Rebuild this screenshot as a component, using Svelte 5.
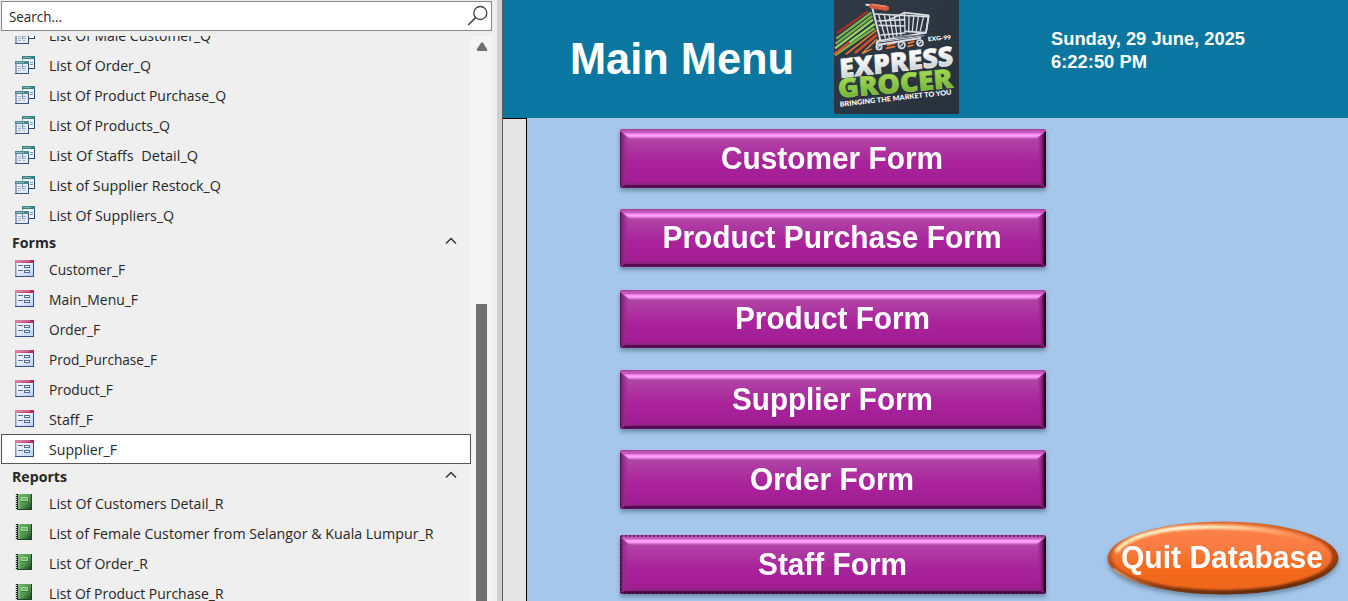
<script>
  const queries = [
    ['List Of Male Customer_Q', 162],
    ['List Of Order_Q', 102],
    ['List Of Product Purchase_Q', 177],
    ['List Of Products_Q', 121],
    ['List Of Staffs\u00a0 Detail_Q', 149],
    ['List of Supplier Restock_Q', 172],
    ['List Of Suppliers_Q', 125]
  ];
  const forms = [
    ['Customer_F', 76],
    ['Main_Menu_F', 89],
    ['Order_F', 51],
    ['Prod_Purchase_F', 108],
    ['Product_F', 64],
    ['Staff_F', 44],
    ['Supplier_F', 68]
  ];
  const reports = [
    ['List Of Customers Detail_R', 174.5],
    ['List of Female Customer from Selangor & Kuala Lumpur_R', 384.5],
    ['List Of Order_R', 99],
    ['List Of Product Purchase_R', 174.5]
  ];
  // label, text width, button height, gap above, baseline
  const buttons = [
    ['Customer Form', 222, 59, 11, 40],
    ['Product Purchase Form', 339, 58, 21, 39],
    ['Product Form', 195, 58, 23, 39],
    ['Supplier Form', 201, 59, 22, 40],
    ['Order Form', 164, 59, 21, 40],
    ['Staff Form', 149, 59, 26, 40]
  ];
  const selected = 'Supplier_F';
</script>

{#snippet queryIcon()}
  <svg class="icon query" width="20" height="18" viewBox="0 0 20 18" shape-rendering="crispEdges">
    <rect x="7" y="0" width="13" height="13" fill="#27446e" />
    <rect x="7" y="0" width="12" height="12" fill="#8da2c0" />
    <rect x="7" y="0" width="13" height="3" fill="#358080" />
    <rect x="8" y="1" width="8" height="1" fill="#7db5b6" />
    <rect x="8" y="3" width="11" height="9" fill="#f4f7fd" />
    <path d="M15 6.500h3M15 8.500h3" stroke="#7894bc" />
    <rect x="0" y="5" width="14" height="13" fill="#36537e" />
    <rect x="0" y="5" width="13" height="12" fill="#93a5c2" />
    <rect x="0" y="5" width="14" height="3" fill="#47898c" />
    <rect x="1" y="6" width="8" height="1" fill="#8fbfc0" />
    <rect x="2" y="8" width="11" height="9" fill="#e6ecf8" />
    <path d="M3 10.500h3M8 10.500h3M3 12.500h3M8 12.500h3M3 14.500h3M8 14.500h2" stroke="#a3b4d2" />
    <path d="M7.500 5v8" stroke="#6f8fae" />
  </svg>
{/snippet}

{#snippet formIcon()}
  <svg class="icon form" width="19" height="17" viewBox="0 0 19 17">
    <defs>
      <linearGradient id="paper" x2="1" y2="1"><stop stop-color="#fff" /><stop offset="1" stop-color="#bcd2fa" /></linearGradient>
      <linearGradient id="cap"><stop stop-color="#dc7da1" /><stop offset="1" stop-color="#aa2355" /></linearGradient>
    </defs>
    <rect width="19" height="17" fill="#344d80" />
    <rect width="18" height="16" fill="#8398bf" />
    <rect x="1.500" y="3" width="16.500" height="13" fill="url(#paper)" />
    <rect width="19" height="3" fill="url(#cap)" />
    <path d="M1 1h14" stroke="#e8a2bc" stroke-width=".7" />
    <path d="M3 5.500h5M3 10.500h5" stroke="#596d94" />
    <rect x="9.500" y="5.500" width="5" height="2" fill="#fff" stroke="#536b9a" />
    <rect x="9.500" y="10.500" width="5" height="2" fill="#fff" stroke="#536b9a" />
  </svg>
{/snippet}

{#snippet reportIcon()}
  <svg class="icon report" width="17" height="16" viewBox="0 0 17 16">
    <defs>
      <linearGradient id="book" x2="1" y2="1"><stop stop-color="#72b56b" /><stop offset=".6" stop-color="#4f964d" /><stop offset="1" stop-color="#174b23" /></linearGradient>
    </defs>
    <rect x="2" width="15" height="16" fill="#1d4427" />
    <rect x="3" width="13" height="15" fill="url(#book)" />
    <rect x="3" y="0" width="2" height="15" fill="#8fc386" opacity=".6" />
    <rect x="6.500" y="3.500" width="6" height="3" fill="#6fb268" stroke="#a5d69b" />
    <path d="M6 7.500h7.500V3" fill="none" stroke="#346f36" stroke-width=".7" />
    <path d="M1.500 0v16" stroke="#161d18" stroke-width="3" stroke-dasharray="1 1" />
    <path d="M.5 0v16" stroke="#bcc5bd" stroke-dasharray="1 1" />
  </svg>
{/snippet}

{#snippet row(item, icon)}
  <div class="row" class:selected={item[0] === selected}>
    {@render icon()}
    <svg class="label" width={item[1]} height="20">
      <text x="0" y="16" textLength={item[1]} lengthAdjust="spacingAndGlyphs">{item[0]}</text>
    </svg>
  </div>
{/snippet}

{#snippet groupHead(name, width)}
  <div class="group">
    <svg class="label" {width} height="20">
      <text x="0" y="16" textLength={width} lengthAdjust="spacingAndGlyphs">{name}</text>
    </svg>
    <svg class="chevron" width="12" height="8" viewBox="0 0 12 8"><path d="M1 6.500 6 1.500l5 5" fill="none" stroke="#333" stroke-width="1.500" /></svg>
  </div>
{/snippet}

<main>
  <aside>
    <div class="search">
      <svg class="label" width="54" height="20"><text x="1" y="16" textLength="53" lengthAdjust="spacingAndGlyphs">Search...</text></svg>
      <svg width="22" height="22" viewBox="0 0 22 22"><circle cx="14.300" cy="8" r="6.500" fill="none" stroke="#444" stroke-width="1.300" /><path d="M9.600 12.600 2.200 20" stroke="#444" stroke-width="1.500" /></svg>
    </div>
    <div class="panel">
      <div class="list">
        <div class="rows">
          {#each queries as q}{@render row(q, queryIcon)}{/each}
          {@render groupHead('Forms', 44)}
          {#each forms as f}{@render row(f, formIcon)}{/each}
          {@render groupHead('Reports', 55)}
          {#each reports as r}{@render row(r, reportIcon)}{/each}
        </div>
      </div>
      <div class="scroll">
        <svg width="12" height="9" viewBox="0 0 12 9"><path d="M5 .7q1-1 2 0l4 6.300q.8 2-1 2H2q-1.800 0-1-2z" fill="#707070" /></svg>
        <div class="thumb"></div>
      </div>
    </div>
  </aside>
  <div class="splitter"></div>

  <section>
    <header>
      <svg class="title" width="224" height="60"><text x="-1" y="49" textLength="224" lengthAdjust="spacingAndGlyphs">Main Menu</text></svg>
      <svg class="logo" width="125" height="114" viewBox="24 0 375 342" preserveAspectRatio="none">
        <defs>
          <linearGradient id="back" x2="1" y2="1"><stop stop-color="#303a45" /><stop offset="1" stop-color="#29323c" /></linearGradient>
          <linearGradient id="silver" x2="0" y2="1"><stop offset=".3" stop-color="#fff" /><stop offset="1" stop-color="#b9bec3" /></linearGradient>
          <linearGradient id="lime" x2="0" y2="1"><stop offset=".2" stop-color="#a6dc55" /><stop offset="1" stop-color="#65a52e" /></linearGradient>
        </defs>
        <rect x="24" width="375" height="342" fill="url(#back)" />
        <g fill="none" stroke-width="7">
          <path d="M126 34 34 99" stroke="#a63027" />
          <path d="M136 38 31 116M139 48 29 131" stroke="#75b950" />
          <path d="M141 59 27 145M146 72 70 127" stroke="#9bd365" />
          <path d="M146 85 27 166" stroke="#77b34a" />
          <path d="m151 91-92 72" stroke="#ed7b32" stroke-width="5" />
          <path d="M70 127 24 163M152 105l-65 54" stroke="#d84d2e" />
          <path d="m153 117-44 43M137 147l-28 14" stroke="#ed8d35" stroke-width="4" />
          <path d="m183 136 28-8M180 145l28-6M245 130l20-6M244 140l19-5" stroke="#f2772f" stroke-width="5" />
        </g>
        <g fill="none" stroke="#d8dee2" stroke-linecap="round" stroke-linejoin="round">
          <path d="m121 14 16 2 26 104q-15 5-10 15l130-21" stroke-width="6" />
          <path d="m147 42 161 8-8 48-133 23M156 63l80-4M159 76l77 2M165 105l72-6" stroke-width="5" />
          <path d="m158 45 20 69M175 46l15 67M190 47l12 65M205 48l8 61M220 48l5 58M235 38l2 56M249 50l-1 45M263 51l-4 43M277 51l-6 42M292 52l-9 39" stroke-width="4" />
          <path d="M186 61 235 38l73 8-8 52-63-4" stroke-width="5" />
          <path d="m154 127 139-20" stroke-width="3" />
          <path d="m205 111 90-5" stroke="#6f7880" stroke-width="4" />
          <g fill="#33404a" stroke-width="5"><circle cx="159" cy="141" r="8" /><circle cx="227" cy="135" r="10" /><circle cx="282" cy="129" r="9" /></g>
          <path d="m154 144 8-8M221 140l10-9M277 133l8-8" stroke-width="4" />
        </g>
        <path d="m137 18 45 7" stroke="#dd593d" stroke-width="15" stroke-linecap="round" />
        <path d="m141 14 38 5" stroke="#f39171" stroke-width="4" stroke-linecap="round" />
        <g class="logo-text">
          <text class="code" transform="translate(306 124) rotate(-5)" textLength="70" lengthAdjust="spacingAndGlyphs">EXG-99</text>
          <text class="big" stroke="#eceff1" transform="translate(42 234) rotate(-6.600) skewX(-3)" textLength="343" lengthAdjust="spacingAndGlyphs">EXPRESS</text>
          <text class="big grocer" stroke="#91ce49" transform="translate(38 293) rotate(-5)" textLength="345" lengthAdjust="spacingAndGlyphs">GROCER</text>
          <text class="tag" transform="translate(42 320) rotate(-6.200)" textLength="337" lengthAdjust="spacingAndGlyphs">BRINGING THE MARKET TO YOU</text>
        </g>
      </svg>
      <div class="clock">
        <svg width="196" height="23"><text x="0" y="18" textLength="194" lengthAdjust="spacingAndGlyphs">Sunday, 29 June, 2025</text></svg>
        <svg width="196" height="23"><text x="0" y="18" textLength="96" lengthAdjust="spacingAndGlyphs">6:22:50 PM</text></svg>
      </div>
    </header>
    <div class="body">
      <div class="selector"></div>
      <div class="menu">
        {#each buttons as [label, width, h, gap, base], i}
          <button style:height="{h}px" style:margin-top="{gap}px">
            <svg width="426" height={h}>
              <defs>
                <linearGradient id="face{i}" x2="0" y2="1"><stop offset=".1" stop-color="#b34aa9" /><stop offset=".55" stop-color="#a9249b" /><stop offset="1" stop-color="#a01a90" /></linearGradient>
                <linearGradient id="top{i}" x2="0" y2="1"><stop stop-color="#9a3b91" /><stop offset=".12" stop-color="#b44cab" /><stop offset=".4" stop-color="#cf60c7" /><stop offset=".5" stop-color="#fa91f3" /><stop offset=".7" stop-color="#ffa8fb" /><stop offset=".85" stop-color="#dd72d5" /><stop offset="1" stop-color="#b34aa9" /></linearGradient>
                <linearGradient id="left{i}"><stop stop-color="#4d1048" /><stop offset=".25" stop-color="#842a7c" /><stop offset="1" stop-color="#a82a9d" stop-opacity="0" /></linearGradient>
                <linearGradient id="right{i}"><stop stop-color="#a82a9d" stop-opacity="0" /><stop offset=".55" stop-color="#7e2175" /><stop offset=".85" stop-color="#2b0529" /><stop offset="1" stop-color="#190217" /></linearGradient>
                <linearGradient id="bottom{i}" x2="0" y2="1"><stop stop-color="#a01f93" /><stop offset=".4" stop-color="#86267d" /><stop offset=".6" stop-color="#570b50" /><stop offset=".85" stop-color="#4c0846" /><stop offset="1" stop-color="#8b1b80" /></linearGradient>
              </defs>
              <rect width="426" height={h} rx="2" fill="url(#face{i})" />
              <path d="M0 2 9 10V{h - 7}L0 {h - 1}z" fill="url(#left{i})" />
              <path d="M1 {h}L8 {h - 6}H418L425 {h}z" fill="url(#bottom{i})" />
              <path d="M426 2 417 10V{h - 7}L426 {h - 1}z" fill="url(#right{i})" />
              <path d="M2 0H424L426 1 416 10H10L0 1z" fill="url(#top{i})" />
              {#if i === 5}
                <rect x="1" y="1" width="424" height={h - 2} fill="none" stroke="#1e0a20" stroke-dasharray="2 2" />
              {/if}
              <text x={[101, 42.500, 115, 112, 130, 138][i]} y={base} textLength={width} lengthAdjust="spacingAndGlyphs">{label}</text>
            </svg>
          </button>
        {/each}
      </div>
      <button class="quit">
        <svg width="232" height="74" viewBox="0 0 232 74">
          <defs>
            <linearGradient id="orange" x2="0" y2="1"><stop stop-color="#fb8248" /><stop offset=".35" stop-color="#f97d42" /><stop offset=".65" stop-color="#f46a20" /><stop offset="1" stop-color="#ee661b" /></linearGradient>
            <linearGradient id="rim" x1=".2" x2=".55" y2="1"><stop stop-color="#e4783e" /><stop offset=".5" stop-color="#b64c19" /><stop offset="1" stop-color="#682b09" /></linearGradient>
            <linearGradient id="shine"><stop stop-color="#ffe4af" /><stop offset=".35" stop-color="#fffbd8" /><stop offset=".65" stop-color="#ffd29c" /><stop offset="1" stop-color="#ffb47c" stop-opacity="0" /></linearGradient>
            <linearGradient id="glint"><stop stop-color="#ffe7b5" /><stop offset="1" stop-color="#ffb47c" stop-opacity="0" /></linearGradient>
            <filter id="soft" x="-10%" y="-20%" width="120%" height="140%"><feGaussianBlur stdDeviation="1.100" /></filter>
            <clipPath id="oval"><ellipse cx="116" cy="37" rx="115.500" ry="36.500" /></clipPath>
          </defs>
          <g clip-path="url(#oval)">
            <ellipse cx="116" cy="37" rx="116" ry="37" fill="url(#rim)" />
            <ellipse cx="115" cy="36" rx="110" ry="33" fill="url(#orange)" filter="url(#soft)" />
            <path d="M9 31C18 17 51 6 100 6q62-1 104 14" fill="none" stroke="url(#shine)" stroke-width="4" filter="url(#soft)" />
            <path d="M6 48q15 12 50 20" fill="none" stroke="url(#glint)" stroke-width="1.800" filter="url(#soft)" />
          </g>
          <text x="14" y="47" textLength="202" lengthAdjust="spacingAndGlyphs">Quit Database</text>
        </svg>
      </button>
    </div>
  </section>
</main>

<style>
  :global(body) { margin: 0; overflow: hidden; }
  * { box-sizing: border-box; }
  svg { display: block; flex: none; }
  main { display: flex; width: 1348px; height: 601px; overflow: hidden; background: #efefef; }
  aside { width: 497px; height: 601px; padding: 1px 5px 0 1px; display: flex; flex-direction: column; }
  .search { display: flex; align-items: center; justify-content: space-between; height: 30px; width: 491px; border: 1px solid #868686; background: #fff; padding: 0 3px 0 6px; flex: none; }
  .label { overflow: visible; }
  .label text { font: 15px "Open Sans", "Noto Sans", sans-serif; fill: #262626; }
  .panel { flex: 1; display: flex; min-height: 0; margin-top: 5px; }
  .list { width: 470px; overflow: hidden; }
  .rows { margin-top: -16px; }
  .row { height: 30px; display: flex; align-items: center; padding-left: 14px; }
  .row .label { margin-left: 14px; }
  .form + .label { margin-left: 15px; }
  .report + .label { margin-left: 17px; }
  .form { margin-top: -1px; }
  .report { margin-top: -2px; }
  .selected { background: #fff; border: 1px solid #555; padding-left: 13px; }
  .group { height: 24px; display: flex; align-items: center; justify-content: space-between; padding: 0 14px 0 11px; }
  .group .label text { font-weight: 700; }
  .chevron { margin-top: -3px; }
  .scroll { width: 21px; background: #f4f4f4; display: flex; flex-direction: column; align-items: center; padding-top: 6px; }
  .thumb { width: 11px; flex: 1; margin-top: 253px; background: #707070; }
  .splitter { width: 6px; background: #cecece; border-right: 1px solid #5d5d5d; flex: none; }
  section { width: 845px; height: 601px; display: flex; flex-direction: column; }
  header { height: 118px; background: #0b76a0; display: flex; align-items: flex-start; flex: none; }
  header text { font-family: "Liberation Sans", Arial, sans-serif; font-weight: 700; fill: #fff; }
  .title { margin: 25px 0 0 68px; overflow: visible; }
  .title text { font-size: 44px; }
  .logo { margin-left: 39px; }
  .logo .logo-text text { font-family: Lato, sans-serif; font-weight: 900; }
  .logo .logo-text .big { font-size: 79px; stroke-width: 2px; font-family: "Open Sans", sans-serif; font-weight: 800; }
  .logo text.big { fill: url(#silver); }
  .logo text.grocer { fill: url(#lime); }
  .logo .code { font-size: 18px; }
  .logo .tag { font-size: 21px; }
  .clock { margin: 27px 0 0 92px; }
  .clock text { font-size: 18.500px; }
  .body { flex: 1; min-height: 0; display: flex; background: #a5c7ea; }
  .selector { width: 24px; background: #e5e5e5; border-top: 1px solid #000; border-right: 1px solid #000; flex: none; }
  .menu { width: 426px; margin-left: 93px; display: flex; flex-direction: column; }
  button { display: block; padding: 0; border: 0; background: none; flex: none; width: 426px; filter: drop-shadow(0 3px 2px #48647c99); }
  button text { font: 700 31px "Liberation Sans", Arial, sans-serif; fill: #fff; }
  .quit { width: 232px; height: 74px; margin: 403px 0 0 61px; }
</style>
